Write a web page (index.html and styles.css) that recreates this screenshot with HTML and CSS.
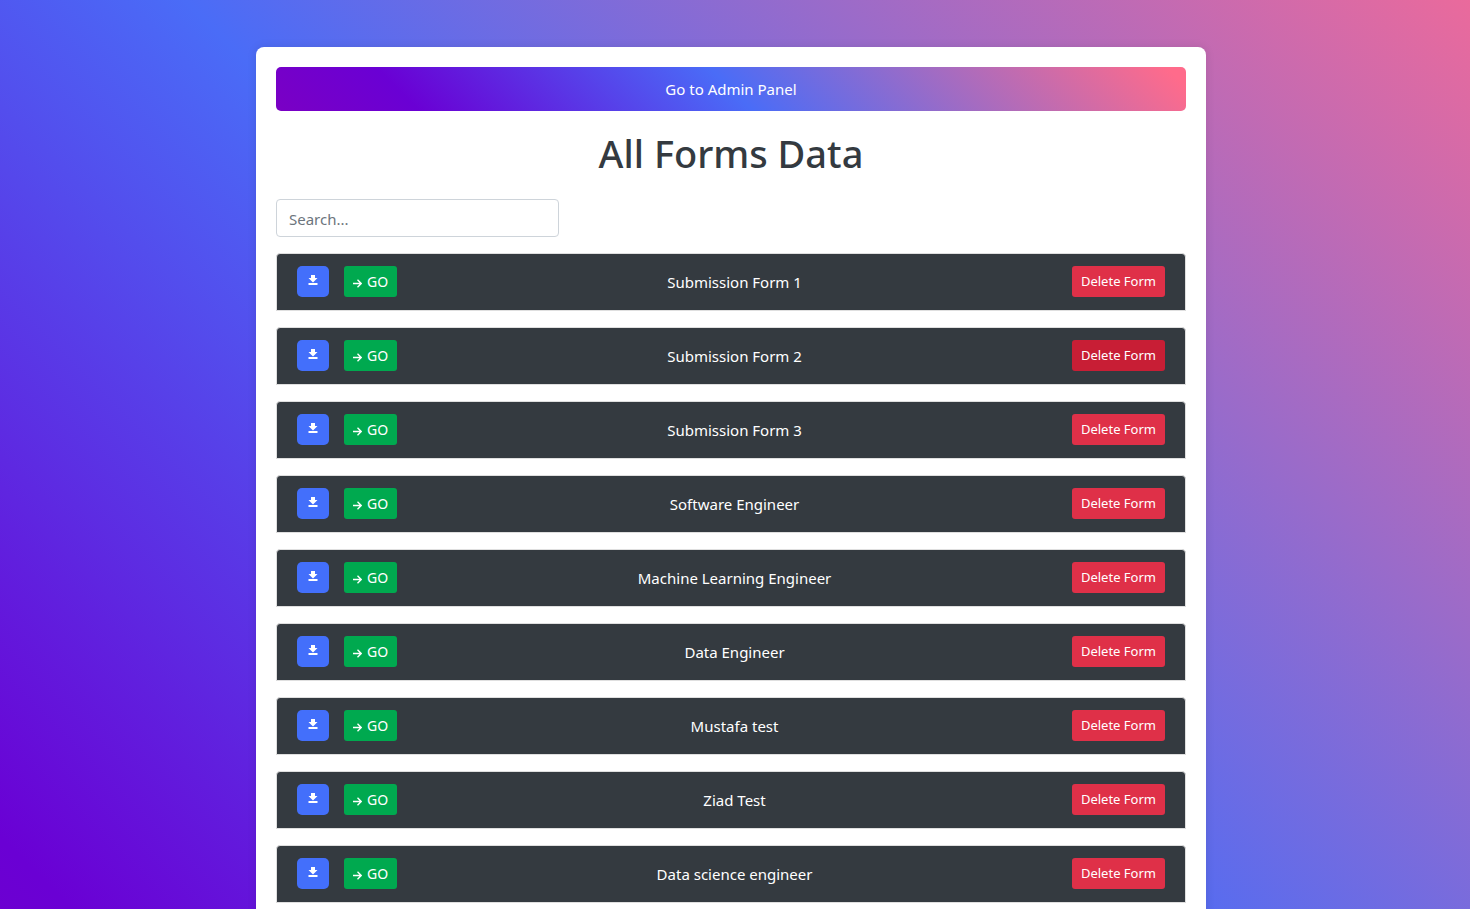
FILE: index.html
```html
<!DOCTYPE html>
<html lang="en">
<head>
<meta charset="utf-8">
<title>All Forms Data</title>
<link rel="stylesheet" href="styles.css">
</head>
<body>
<svg class="sprite" aria-hidden="true">
  <symbol id="download" viewBox="0 0 10 10"><path d="M3 0h4v3h2.500L5 7.500.5 3H3zM.5 8h9v2h-9z"/></symbol>
  <symbol id="arrow" viewBox="0 0 8 8"><path d="M0 4h7.300M4 .7 7.300 4 4 7.300" fill="none" stroke="currentColor" stroke-width="1.200"/></symbol>
</svg>
<main class="panel">
  <a class="admin-link" href="#admin">Go to Admin Panel</a>
  <h1 class="title">All Forms Data</h1>
  <input class="search" type="search" placeholder="Search..." aria-label="Search forms">
  <ul class="forms" id="forms"></ul>
</main>
<script src="forms.js"></script>
</body>
</html>
```

FILE: forms.js
```js
const names = ["Submission Form 1", "Submission Form 2", "Submission Form 3", "Software Engineer",
  "Machine Learning Engineer", "Data Engineer", "Mustafa test", "Ziad Test", "Data science engineer"];
document.getElementById("forms").innerHTML = names.map((name, i) => `
  <li class="form-row">
    <div class="actions">
      <button class="btn btn-download" type="button" aria-label="Download ${name}"><svg class="icon-download"><use href="#download"/></svg></button>
      <a class="btn btn-go" href="#form-${i + 1}"><svg class="icon-arrow"><use href="#arrow"/></svg>GO</a>
    </div>
    <span class="name">${name}</span>
    <button class="btn btn-delete${i === 1 ? " active" : ""}" type="button">Delete Form</button>
  </li>`).join("");
```

FILE: styles.css
```css
* { box-sizing: border-box; }
html { min-height: 100%; }
body {
  margin: 0;
  padding: 47px 8px 0 0;
  font: 15px/24px "Segoe UI", "Noto Sans", sans-serif;
  color: #343a40;
  background: linear-gradient(45deg, #6c00d1, #6a00d4 3%, #4a6cf7 46%, #ea6a9c) fixed;
}
.sprite { position: absolute; width: 0; height: 0; }
.panel {
  max-width: 950px;
  margin: 0 auto;
  padding: 20px 20px 28px;
  background: #fff;
  border-radius: 8px;
  box-shadow: 0 0 10px rgba(0, 0, 0, .1);
}
.admin-link {
  display: block;
  padding: 10px;
  border-radius: 5px;
  color: #fff;
  text-align: center;
  text-decoration: none;
  background: linear-gradient(45deg, #7a00c4, #6a00d4 15%, #4a6cf7 50%, #ff6b8b 98%);
}
.title {
  margin: 18px 0 22px;
  font-size: 38px;
  font-weight: 500;
  line-height: 48px;
  text-align: center;
}
.search {
  display: block;
  width: 283px;
  max-width: 100%;
  height: 38px;
  padding: 7px 12px 5px;
  border: 1px solid #ced4da;
  border-radius: 4px;
  font: inherit;
  appearance: none;
}
.search::placeholder { color: #6c757d; opacity: 1; }
.forms {
  display: flex;
  flex-direction: column;
  gap: 16px;
  margin: 16px 0 0;
  padding: 0;
  list-style: none;
}
.form-row {
  display: flex;
  align-items: center;
  justify-content: space-between;
  padding: 12px 20px 13px;
  border: 1px solid #dfdfdf;
  border-radius: 4px 4px 0 0;
  background: #343a40;
  color: #fff;
}
.actions { display: flex; gap: 15px; }
.btn {
  display: flex;
  align-items: center;
  justify-content: center;
  height: 31px;
  padding: 0 9px;
  border: 0;
  border-radius: 3px;
  color: #fff;
  font: 13px/21px "Segoe UI", "Noto Sans", sans-serif;
  text-decoration: none;
}
.btn-download { width: 32px; border-radius: 5px; background: #436ffb; }
.btn-go { gap: 5px; font-size: 14px; background: #00a94f; }
.btn-delete { background: #df3048; }
.btn-delete.active { background: #c81e35; }
.icon-download { width: 10px; height: 10px; margin-bottom: 3px; fill: currentColor; }
.icon-arrow { width: 9px; height: 9px; margin-top: 3px; }
```
